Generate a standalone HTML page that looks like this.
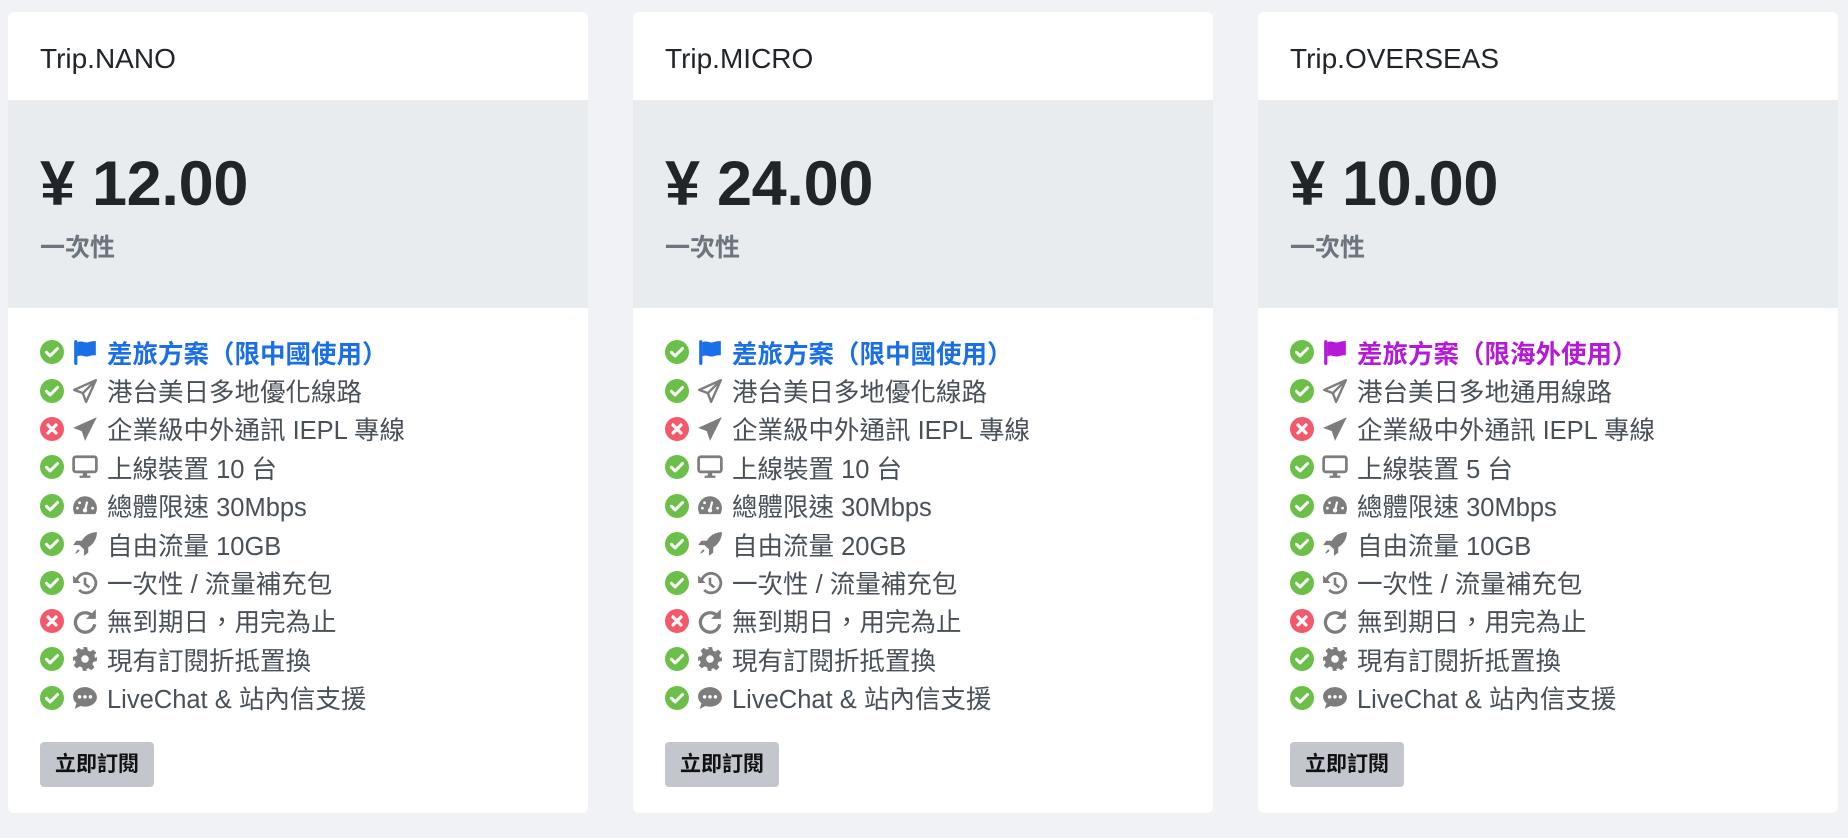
<!DOCTYPE html>
<html><head><meta charset="utf-8"><style>
*{margin:0;padding:0;box-sizing:border-box}
body{width:1848px;height:838px;background:#f0f2f5;font-family:"Liberation Sans","Noto Sans CJK TC",sans-serif;position:relative;overflow:hidden}
.card{position:absolute;top:12px;width:580px;height:801px;background:#fff;border-radius:6px;overflow:hidden}
.hd{height:88px;padding-left:32px;font-size:28px;color:#212529;line-height:94px}
.band{height:208px;background:#e9ecef;padding-left:32px}
.price{font-size:63px;font-weight:bold;color:#212529;padding-top:46px;line-height:76px;letter-spacing:-0.3px}
.once{font-size:25px;font-weight:bold;color:#6c757d;margin-top:6px}
ul{list-style:none;padding:25px 0 0 32px}
li{height:38.4px;display:flex;align-items:center;font-size:25.5px;color:#495057;white-space:nowrap}
li svg{flex:none}
.st{width:24px;height:24px;margin-right:8px}
.ic{width:26px;height:26px;margin-right:9px}
.blue{color:#1a6fe8;font-weight:bold}
.pur{color:#b51ad8;font-weight:bold}
.btn{position:absolute;left:32px;top:730px;width:114px;height:45px;background:#c3c7cd;border-radius:4px;font-size:21px;font-weight:bold;color:#111;text-align:center;line-height:45px}
</style></head><body>
<svg width="0" height="0" style="position:absolute">
<defs>
<symbol id="ok" viewBox="0 0 24 24"><circle cx="12" cy="12" r="12" fill="#6cc04a"/><path d="M6.5 12.3l3.6 3.6 7.4-7.4" stroke="#fff" stroke-width="3" fill="none" stroke-linecap="round" stroke-linejoin="round"/></symbol>
<symbol id="no" viewBox="0 0 24 24"><circle cx="12" cy="12" r="12" fill="#f25a6c"/><path d="M8 8l8 8M16 8l-8 8" stroke="#fff" stroke-width="3.2" stroke-linecap="round"/></symbol>
<symbol id="flag" viewBox="0 0 24 24"><rect x="2" y="1" width="3" height="23" rx="1.5" fill="currentColor"/><path d="M5 3c4-2 7 1 10 0s5-1 7-1v13c-2 0-4 0-7 1s-6-2-10 0z" fill="currentColor"/></symbol>
<symbol id="plane" viewBox="0 0 24 24"><path d="M22 2L2 11l8 3 3 8zM22 2L10 14" stroke="#7d7d7d" stroke-width="2.2" fill="none" stroke-linejoin="round"/></symbol>
<symbol id="planef" viewBox="0 0 24 24"><path d="M23 1L1 11l8 3 3 9z" fill="#7d7d7d"/></symbol>
<symbol id="mon" viewBox="0 0 24 24"><rect x="1.5" y="2.5" width="21" height="14" rx="2" stroke="#7d7d7d" stroke-width="2.5" fill="none"/><path d="M10 17h4v3h3v2H7v-2h3z" fill="#7d7d7d"/></symbol>
<symbol id="gauge" viewBox="0 0 24 24"><path d="M12 3A11 11 0 0 0 1 14c0 2 .5 4 1.5 5.5h19C22.5 18 23 16 23 14A11 11 0 0 0 12 3z" fill="#7d7d7d"/><path d="M12 16l2-8" stroke="#fff" stroke-width="2"/><circle cx="12" cy="16" r="2" fill="#fff"/><circle cx="5" cy="14" r="1.3" fill="#fff"/><circle cx="19" cy="14" r="1.3" fill="#fff"/><circle cx="7" cy="9" r="1.3" fill="#fff"/></symbol>
<symbol id="rocket" viewBox="0 0 24 24"><path d="M23 1c-6 0-11 3-14 8H4l-3 4h6l4 4v6l4-3v-5c5-3 8-8 8-14z" fill="#7d7d7d"/><path d="M6 17c-2 1-3 4-3 4s3-1 4-3z" fill="#7d7d7d"/></symbol>
<symbol id="hist" viewBox="0 0 24 24"><path d="M4 12a9 9 0 1 1 2.6 6.4" stroke="#7d7d7d" stroke-width="2.6" fill="none"/><path d="M1 5v7h7z" fill="#7d7d7d"/><path d="M12 7v6l4 3" stroke="#7d7d7d" stroke-width="2.4" fill="none"/></symbol>
<symbol id="redo" viewBox="0 0 24 24"><path d="M19 7.5A9 9 0 1 0 21 15" stroke="#7d7d7d" stroke-width="3" fill="none"/><path d="M22 1v9h-9z" fill="#7d7d7d"/></symbol>
<symbol id="cog" viewBox="0 0 24 24"><path d="M10 1h4l.6 3.2 2.3 1 2.7-1.9 2.8 2.8-1.9 2.7 1 2.3L23 10v4l-3.2.6-1 2.3 1.9 2.7-2.8 2.8-2.7-1.9-2.3 1L14 23h-4l-.6-3.2-2.3-1-2.7 1.9-2.8-2.8 1.9-2.7-1-2.3L1 14v-4l3.2-.6 1-2.3-1.9-2.7 2.8-2.8 2.7 1.9 2.3-1z" fill="#7d7d7d"/><circle cx="12" cy="12" r="3.5" fill="#fff"/></symbol>
<symbol id="chat" viewBox="0 0 24 24"><path d="M12 2C5.9 2 1 5.9 1 10.7c0 2.4 1.2 4.5 3.1 6.1L2.5 22l5.3-2.6c1.3.4 2.7.6 4.2.6 6.1 0 11-3.9 11-8.7S18.1 2 12 2z" fill="#7d7d7d"/><circle cx="7" cy="11" r="1.6" fill="#fff"/><circle cx="12" cy="11" r="1.6" fill="#fff"/><circle cx="17" cy="11" r="1.6" fill="#fff"/></symbol>
</defs></svg>

<div class="card" style="left:8px">
<div class="hd">Trip.NANO</div>
<div class="band"><div class="price">¥ 12.00</div><div class="once">一次性</div></div>
<ul>
<li class="blue"><svg class="st"><use href="#ok"/></svg><svg class="ic" style="color:#1a6fe8"><use href="#flag"/></svg>差旅方案（限中國使用）</li>
<li><svg class="st"><use href="#ok"/></svg><svg class="ic"><use href="#plane"/></svg>港台美日多地優化線路</li>
<li><svg class="st"><use href="#no"/></svg><svg class="ic"><use href="#planef"/></svg>企業級中外通訊 IEPL 專線</li>
<li><svg class="st"><use href="#ok"/></svg><svg class="ic"><use href="#mon"/></svg>上線裝置 10 台</li>
<li><svg class="st"><use href="#ok"/></svg><svg class="ic"><use href="#gauge"/></svg>總體限速 30Mbps</li>
<li><svg class="st"><use href="#ok"/></svg><svg class="ic"><use href="#rocket"/></svg>自由流量 10GB</li>
<li><svg class="st"><use href="#ok"/></svg><svg class="ic"><use href="#hist"/></svg>一次性 / 流量補充包</li>
<li><svg class="st"><use href="#no"/></svg><svg class="ic"><use href="#redo"/></svg>無到期日，用完為止</li>
<li><svg class="st"><use href="#ok"/></svg><svg class="ic"><use href="#cog"/></svg>現有訂閱折抵置換</li>
<li><svg class="st"><use href="#ok"/></svg><svg class="ic"><use href="#chat"/></svg>LiveChat &amp; 站內信支援</li>
</ul>
<div class="btn">立即訂閱</div>
</div>

<div class="card" style="left:633px">
<div class="hd">Trip.MICRO</div>
<div class="band"><div class="price">¥ 24.00</div><div class="once">一次性</div></div>
<ul>
<li class="blue"><svg class="st"><use href="#ok"/></svg><svg class="ic" style="color:#1a6fe8"><use href="#flag"/></svg>差旅方案（限中國使用）</li>
<li><svg class="st"><use href="#ok"/></svg><svg class="ic"><use href="#plane"/></svg>港台美日多地優化線路</li>
<li><svg class="st"><use href="#no"/></svg><svg class="ic"><use href="#planef"/></svg>企業級中外通訊 IEPL 專線</li>
<li><svg class="st"><use href="#ok"/></svg><svg class="ic"><use href="#mon"/></svg>上線裝置 10 台</li>
<li><svg class="st"><use href="#ok"/></svg><svg class="ic"><use href="#gauge"/></svg>總體限速 30Mbps</li>
<li><svg class="st"><use href="#ok"/></svg><svg class="ic"><use href="#rocket"/></svg>自由流量 20GB</li>
<li><svg class="st"><use href="#ok"/></svg><svg class="ic"><use href="#hist"/></svg>一次性 / 流量補充包</li>
<li><svg class="st"><use href="#no"/></svg><svg class="ic"><use href="#redo"/></svg>無到期日，用完為止</li>
<li><svg class="st"><use href="#ok"/></svg><svg class="ic"><use href="#cog"/></svg>現有訂閱折抵置換</li>
<li><svg class="st"><use href="#ok"/></svg><svg class="ic"><use href="#chat"/></svg>LiveChat &amp; 站內信支援</li>
</ul>
<div class="btn">立即訂閱</div>
</div>

<div class="card" style="left:1258px">
<div class="hd">Trip.OVERSEAS</div>
<div class="band"><div class="price">¥ 10.00</div><div class="once">一次性</div></div>
<ul>
<li class="pur"><svg class="st"><use href="#ok"/></svg><svg class="ic" style="color:#b51ad8"><use href="#flag"/></svg>差旅方案（限海外使用）</li>
<li><svg class="st"><use href="#ok"/></svg><svg class="ic"><use href="#plane"/></svg>港台美日多地通用線路</li>
<li><svg class="st"><use href="#no"/></svg><svg class="ic"><use href="#planef"/></svg>企業級中外通訊 IEPL 專線</li>
<li><svg class="st"><use href="#ok"/></svg><svg class="ic"><use href="#mon"/></svg>上線裝置 5 台</li>
<li><svg class="st"><use href="#ok"/></svg><svg class="ic"><use href="#gauge"/></svg>總體限速 30Mbps</li>
<li><svg class="st"><use href="#ok"/></svg><svg class="ic"><use href="#rocket"/></svg>自由流量 10GB</li>
<li><svg class="st"><use href="#ok"/></svg><svg class="ic"><use href="#hist"/></svg>一次性 / 流量補充包</li>
<li><svg class="st"><use href="#no"/></svg><svg class="ic"><use href="#redo"/></svg>無到期日，用完為止</li>
<li><svg class="st"><use href="#ok"/></svg><svg class="ic"><use href="#cog"/></svg>現有訂閱折抵置換</li>
<li><svg class="st"><use href="#ok"/></svg><svg class="ic"><use href="#chat"/></svg>LiveChat &amp; 站內信支援</li>
</ul>
<div class="btn">立即訂閱</div>
</div>
</body></html>
